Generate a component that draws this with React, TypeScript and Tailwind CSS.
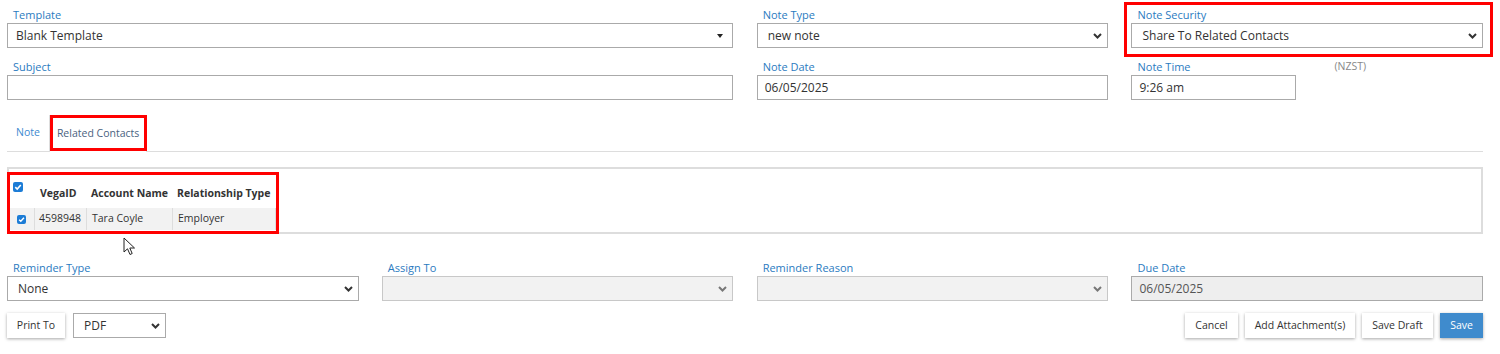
import React from "react";

const Chevron = ({ color = "#333" }: { color?: string }) => (
  <svg width="9" height="6" viewBox="0 0 9 6" className="shrink-0">
    <path d="M1 1 L4.5 4.5 L8 1" fill="none" stroke={color} strokeWidth="2" />
  </svg>
);

const Label = ({ children }: { children: React.ReactNode }) => (
  <div className="h-[15px] pl-[6px] text-[11px] leading-[13px] text-[#2b7bbf]">{children}</div>
);

const Select = ({
  value,
  disabled,
  className = "",
}: {
  value?: string;
  disabled?: boolean;
  className?: string;
}) => (
  <div
    className={`flex h-[25px] items-center justify-between border pl-[10px] pr-[5px] text-[12px] ${
      disabled ? "border-[#c8c8c8] bg-[#f2f2f2] text-[#555]" : "border-[#aaa] bg-white text-[#333]"
    } ${className}`}
  >
    <span>{value ?? ""}</span>
    <Chevron color={disabled ? "#777" : "#333"} />
  </div>
);

const Input = ({ value, className = "" }: { value?: string; className?: string }) => (
  <div className={`flex h-[25px] items-center border border-[#aaa] bg-white pl-[7px] text-[12px] text-[#333] ${className}`}>
    {value ?? ""}
  </div>
);

const Check = ({ size = 10 }: { size?: number }) => (
  <span
    className="inline-flex items-center justify-center rounded-[2px] bg-[#1c7cd6]"
    style={{ width: size, height: size }}
  >
    <svg width={size - 2} height={size - 2} viewBox="0 0 8 8">
      <path d="M1.3 4.2 L3.2 6 L6.8 2" fill="none" stroke="white" strokeWidth="1.6" />
    </svg>
  </span>
);

const Btn = ({ children, w, primary }: { children: React.ReactNode; w: string; primary?: boolean }) => (
  <div
    className={`flex h-[25px] items-center justify-center text-[10.5px] shadow-[0_1px_3px_rgba(0,0,0,0.35)] ${w} ${
      primary ? "bg-[#3f8bcd] text-white" : "bg-white text-[#333]"
    }`}
  >
    {children}
  </div>
);

export default function App() {
  return (
    <div className="relative h-[354px] w-[1500px] overflow-hidden bg-white pl-[7px] pr-[17px] pt-[8px] font-['Open_Sans',sans-serif]">
      {/* top fields */}
      <div className="grid grid-cols-4 gap-x-[23.33px] gap-y-[12px]">
        <div className="col-span-2">
          <Label>Template</Label>
          <div className="flex h-[25px] items-center justify-between border border-[#aaa] bg-white pl-[8px] pr-[9px] text-[12px] text-[#333]">
            <span>Blank Template</span>
            <svg width="6" height="4" viewBox="0 0 6 4">
              <path d="M0 0 L6 0 L3 4 Z" fill="#222" />
            </svg>
          </div>
        </div>
        <div>
          <Label>Note Type</Label>
          <Select value="new note" />
        </div>
        <div>
          <Label>Note Security</Label>
          <Select value="Share To Related Contacts" />
        </div>

        <div className="col-span-2">
          <Label>Subject</Label>
          <Input />
        </div>
        <div>
          <Label>Note Date</Label>
          <Input value="06/05/2025" />
        </div>
        <div className="flex">
          <div className="w-[165px]">
            <Label>Note Time</Label>
            <Input value="9:26 am" />
          </div>
          <div className="ml-[38px] text-[10.5px] leading-[13px] text-[#888]">(NZST)</div>
        </div>
      </div>

      {/* tabs */}
      <div className="mt-[15px] flex h-[37px] border-b border-[#ddd] text-[10.5px]">
        <div className="flex h-[36px] items-center px-[9px] text-[#3d8ad0]">Note</div>
        <div className="flex h-[37px] items-center border-x border-t border-[#ddd] bg-white px-[7px] text-[#4a6280]">
          Related Contacts
        </div>
      </div>

      {/* related contacts table */}
      <div className="mt-[15px] h-[67px] border-2 border-[#ddd] text-[10.5px] text-[#333]">
        <div className="flex h-[37px]">
          <div className="w-[26px] pl-[4px] pt-[11px]">
            <Check size={10} />
          </div>
          <div className="flex w-[52px] items-end pb-[5px] pl-[5px] font-bold leading-[15px]">VegaID</div>
          <div className="flex w-[86px] items-end pb-[5px] pl-[4px] font-bold leading-[15px] whitespace-nowrap">
            Account Name
          </div>
          <div className="flex w-[103px] items-end pb-[5px] pl-[4px] font-bold leading-[15px] whitespace-nowrap">
            Relationship Type
          </div>
        </div>
        <div className="mt-[2px] flex h-[22px] w-[267px] bg-[#f2f2f2]">
          <div className="flex w-[26px] items-center justify-center border-r border-[#ddd]">
            <Check size={9} />
          </div>
          <div className="flex w-[52px] items-center border-r border-[#ddd] pl-[4px]">4598948</div>
          <div className="flex w-[86px] items-center border-r border-[#ddd] pl-[5px]">Tara Coyle</div>
          <div className="flex w-[103px] items-center border-r border-[#ddd] pl-[5px]">Employer</div>
        </div>
      </div>

      {/* reminder row */}
      <div className="mt-[27px] grid grid-cols-4 gap-x-[23.33px]">
        <div>
          <Label>Reminder Type</Label>
          <Select value="None" />
        </div>
        <div>
          <Label>Assign To</Label>
          <Select disabled />
        </div>
        <div>
          <Label>Reminder Reason</Label>
          <Select disabled />
        </div>
        <div>
          <Label>Due Date</Label>
          <div className="flex h-[25px] items-center border border-[#aaa] bg-[#eee] pl-[7px] text-[12px] text-[#555]">
            06/05/2025
          </div>
        </div>
      </div>

      {/* bottom buttons */}
      <div className="mt-[12px] flex items-start justify-between">
        <div className="flex items-start gap-[8px]">
          <Btn w="w-[58px]">Print To</Btn>
          <Select value="PDF" className="h-[24px] w-[93px] pr-[4px]" />
        </div>
        <div className="flex gap-[7px]">
          <Btn w="w-[53px]">Cancel</Btn>
          <Btn w="w-[110px]">Add Attachment(s)</Btn>
          <Btn w="w-[71px]">Save Draft</Btn>
          <Btn w="w-[43px]" primary>
            Save
          </Btn>
        </div>
      </div>

      {/* red annotation boxes */}
      <div className="pointer-events-none absolute left-[1124px] top-[2px] h-[55px] w-[369px] border-[3px] border-[#ff0000]" />
      <div className="pointer-events-none absolute left-[50px] top-[115px] h-[36px] w-[97px] border-[3px] border-[#ff0000]" />
      <div className="pointer-events-none absolute left-[7px] top-[172px] h-[62px] w-[272px] border-[3px] border-[#ff0000]" />

      {/* mouse cursor */}
      <svg className="pointer-events-none absolute left-[123px] top-[237px]" width="13" height="19" viewBox="0 0 13 19">
        <path d="M1 1 L1 15 L4.5 11.8 L7 17.5 L9.2 16.5 L6.8 11 L11.5 11 Z" fill="white" stroke="#222" strokeWidth="1" strokeLinejoin="round" />
      </svg>
    </div>
  );
}
